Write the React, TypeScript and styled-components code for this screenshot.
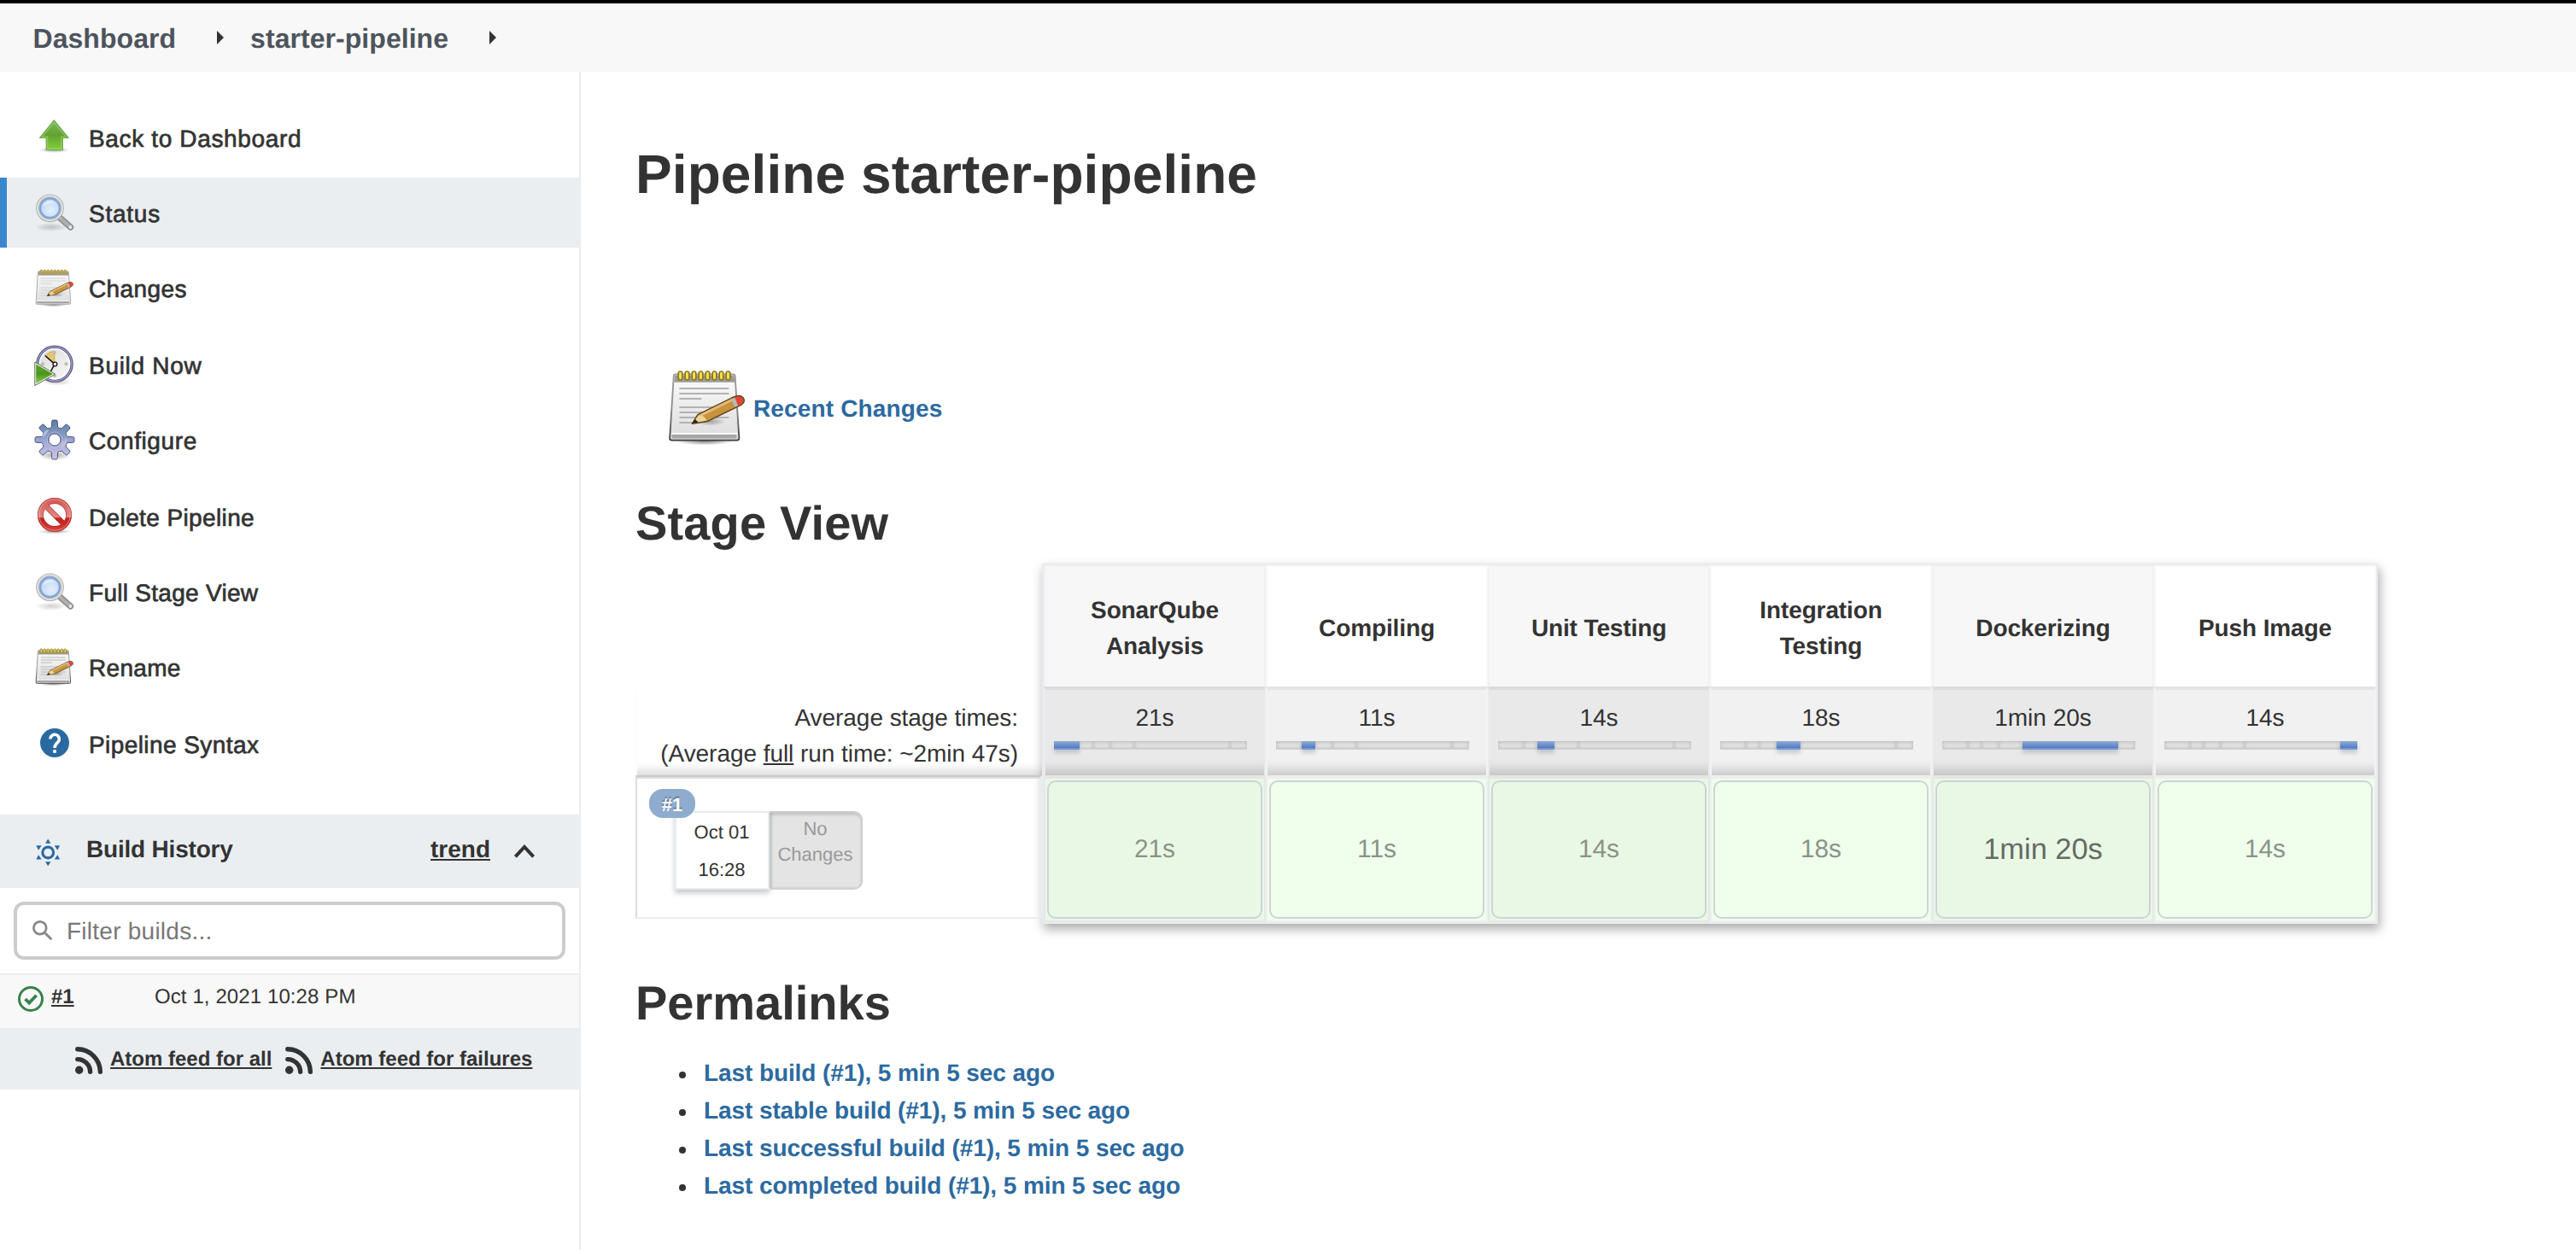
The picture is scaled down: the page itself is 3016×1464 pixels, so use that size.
import React from 'react';
import styled, { createGlobalStyle } from 'styled-components';

const GlobalStyle = createGlobalStyle`
  * { box-sizing: border-box; }
  html, body { margin: 0; padding: 0; background: #fff; }
  body {
    font-family: "Liberation Sans", Arial, sans-serif;
    font-size: 28px;
    line-height: 42px;
    color: #333;
    text-rendering: geometricPrecision;
    overflow: hidden;
  }
`;

/* ---------- page frame ---------- */

const Page = styled.div`
  width: 100%;
  height: 1464px;
  display: flex;
  flex-direction: column;
`;

const Breadcrumbs = styled.nav`
  flex: none;
  height: 84px;
  border-top: 4px solid #000;
  background: #f8f8f8;
  display: flex;
  align-items: center;
  padding: 0 0 0 38.5px;
`;

const Crumb = styled.a`
  font-size: 32px;
  line-height: 40px;
  font-weight: 700;
  letter-spacing: 0.05px;
  color: #4d545d;
  padding-top: 2px;
`;

const CrumbArrow = styled.span<{ $before: number; $after: number }>`
  width: 0;
  height: 0;
  margin: 0 ${p => p.$after}px 0 ${p => p.$before}px;
  border-left: 8px solid #333;
  border-top: 8px solid transparent;
  border-bottom: 8px solid transparent;
`;

const Body = styled.div`
  flex: 1;
  display: flex;
  min-height: 0;
`;

const Sidebar = styled.aside`
  flex: none;
  width: 680px;
  border-right: 2px solid #eaeef1;
  padding-top: 36px;
  display: flex;
  flex-direction: column;
`;

const Main = styled.main`
  flex: 1;
  padding: 80px 0 0 64px;
`;

/* ---------- side navigation ---------- */

const Tasks = styled.div`
  display: flex;
  flex-direction: column;
  gap: 6px;
  margin-bottom: 42px;
`;

const Task = styled.a<{ $active?: boolean; $height: number }>`
  height: ${p => p.$height}px;
  display: flex;
  align-items: flex-start;
  padding: 17px 0 0 ${p => (p.$active ? 32 : 40)}px;
  border-left: ${p => (p.$active ? '8px solid #3b87cf' : '0')};
  background: ${p => (p.$active ? '#eaeef1' : 'transparent')};
  gap: 16px;
`;

const TaskLabel = styled.span<{ $track: number }>`
  padding-top: 5px;
  letter-spacing: ${p => p.$track}px;
  -webkit-text-stroke: 0.7px #333;
`;

const IconBox = styled.svg<{ $size?: number }>`
  flex: none;
  display: block;
  overflow: visible;
  width: ${p => p.$size ?? 48}px;
  height: ${p => p.$size ?? 48}px;
`;

/* ---------- build history ---------- */

const HistoryHeader = styled.div`
  height: 86px;
  background: #eaeef1;
  display: flex;
  align-items: center;
  padding: 0 52px 0 41px;
`;

const HistoryTitle = styled.span`
  font-weight: 700;
  letter-spacing: -0.2px;
  margin-left: 29px;
  flex: 1;
  padding-bottom: 5px;
`;

const TrendLink = styled.a`
  font-weight: 700;
  text-decoration: underline;
  text-decoration-thickness: 2px;
  text-underline-offset: 2px;
  padding-bottom: 5px;
  margin-right: 28px;
`;

const FilterArea = styled.div`
  padding: 16px;
  height: 100px;
`;

const FilterField = styled.div`
  height: 68px;
  border: 4px solid #ccc;
  border-radius: 12px;
  display: flex;
  align-items: center;
  padding-left: 18px;
  gap: 16px;
  color: #777;
  letter-spacing: 0.25px;

  span {
    padding-top: 2px;
  }
`;

const BuildRow = styled.div`
  height: 64px;
  border-top: 2px solid #eaeef1;
  background: #f8f8f8;
  display: flex;
  align-items: flex-start;
  font-size: 24px;
  line-height: 30px;
  padding: 13px 0 0 21px;
`;

const BuildNumber = styled.div`
  width: 130px;
  padding-left: 9px;
  margin-top: -2px;
  font-weight: 700;
  text-decoration: underline;
  text-decoration-thickness: 2px;
  text-underline-offset: 2px;
`;

const BuildDate = styled.span`
  margin-top: -2px;
  letter-spacing: 0.1px;
`;

const FeedRow = styled.div`
  height: 72px;
  background: #eaeef1;
  display: flex;
  align-items: flex-start;
  padding: 22px 0 0 88px;
`;

const FeedLink = styled.a`
  font-size: 24px;
  line-height: 32px;
  font-weight: 700;
  text-decoration: underline;
  text-decoration-thickness: 2px;
  text-underline-offset: 2px;
  margin: -1px 16px 0 9px;
`;

/* ---------- main column ---------- */

const PageTitle = styled.h1`
  margin: 0 0 185px;
  font-size: 64px;
  line-height: 80px;
  font-weight: 700;
  letter-spacing: 0.1px;
`;

const SectionTitle = styled.h2<{ $track?: number }>`
  margin: 0;
  font-size: 56px;
  line-height: 72px;
  font-weight: 700;
  letter-spacing: ${p => p.$track ?? 0}px;
`;

const RecentChanges = styled.div`
  display: flex;
  align-items: center;
  padding-left: 36px;
  gap: 6px;
  margin-bottom: 52px;
`;

const BlueLink = styled.a<{ $track?: number }>`
  color: #2c6aa0;
  font-weight: 700;
  letter-spacing: ${p => p.$track ?? 0}px;
`;

const RecentLink = styled(BlueLink)`
  padding-top: 3px;
`;

/* ---------- stage view ---------- */

const StageView = styled.section`
  display: flex;
  align-items: flex-start;
  width: 2040px;
  margin: 11px 0 57px;
`;

const RunColumn = styled.div`
  width: 476px;
  padding-top: 148px;
`;

const AverageLabel = styled.div`
  height: 100px;
  padding: 12px 28px 0 0;
  text-align: right;
  letter-spacing: -0.05px;
  border-left: 2px solid #fcfcfc;
  box-shadow: inset 0 -18px 14px -14px rgba(0, 0, 0, 0.18);

  u {
    text-decoration-thickness: 2px;
    text-underline-offset: 2px;
  }
`;

const RunCell = styled.div`
  position: relative;
  height: 168px;
  border: 2px solid #ececec;
  border-left-color: #ddd;
  border-top-color: #c9c9c9;
  box-shadow: inset 0 2px 0 #dedede;
  padding: 40px 0 0 44px;
  display: flex;
  font-size: 22px;
`;

const RunBadge = styled.span`
  position: absolute;
  left: 14px;
  top: 14px;
  width: 54px;
  height: 34px;
  border-radius: 16px;
  background: #8facce;
  color: #fff;
  font-weight: 700;
  line-height: 37px;
  text-align: center;
  text-shadow: 0 -2px 1px rgba(0, 0, 0, 0.3);
`;

const RunDate = styled.div`
  width: 111px;
  height: 92px;
  border: 2px solid #e6ecf1;
  background: #fff;
  line-height: 44px;
  padding: 1px 1px 0 0;
  text-align: center;
  box-shadow: 0 4px 6px rgba(0, 0, 0, 0.22);
`;

const RunChanges = styled.div`
  width: 109px;
  height: 92px;
  border: 2px solid #ccc;
  border-left-width: 0;
  border-bottom-color: #d2d2d2;
  border-radius: 0 10px 10px 0;
  background: #e4e4e4;
  box-shadow: inset 0 3px 3px rgba(0, 0, 0, 0.1), inset 3px 0 3px rgba(0, 0, 0, 0.12);
  color: #999;
  line-height: 30px;
  padding-top: 4px;
  text-align: center;
`;

const Stages = styled.div`
  display: grid;
  grid-template-columns: repeat(6, 260px);
  border: 2px solid #e8ecf0;
  box-shadow: 2px 6px 12px rgba(0, 0, 0, 0.34);
  background: #fff;
`;

const Stage = styled.div`
  display: flex;
  flex-direction: column;
`;

type Shade = { $odd: boolean };

const StageHeader = styled.div<Shade>`
  height: 142px;
  border: 2px solid ${p => (p.$odd ? '#f1f1f1' : '#f8f8f8')};
  border-bottom: 0;
  background: ${p => (p.$odd ? '#f7f7f7' : '#fff')};
  display: flex;
  align-items: center;
  justify-content: center;
  text-align: center;
  padding: 4px 40px 0;
  font-weight: 700;
  letter-spacing: -0.12px;
`;

const StageAverage = styled.div<Shade>`
  height: 104px;
  border: 2px solid ${p => (p.$odd ? '#ebebeb' : '#f3f3f3')};
  border-top: 4px solid ${p => (p.$odd ? '#dcdcdc' : '#e4e4e4')};
  border-bottom: 0;
  background: ${p => (p.$odd ? '#e9e9e9' : '#f1f1f1')};
  box-shadow: inset 0 -20px 14px -14px rgba(0, 0, 0, 0.18);
  text-align: center;
  padding: 12px 20px 0 10px;
`;

const AverageTime = styled.div`
  margin-right: -10px;
`;

const Timeline = styled.div`
  display: flex;
  height: 10px;
  width: 226px;
  margin-top: 6px;
`;

const Segment = styled.span<{ $active: boolean }>`
  height: 10px;
  background: ${p => (p.$active ? 'linear-gradient(#8eaed0, #5579c4)' : '#e2e2e2')};
  border-bottom: 2px solid ${p => (p.$active ? '#6f98da' : '#cfcfcf')};
  box-shadow: ${p =>
    p.$active ? '0 4px 5px rgba(0, 0, 0, 0.16)' : 'inset 0 1px 4px rgba(0, 0, 0, 0.2)'};
`;

const StageResult = styled.div<Shade>`
  height: 172px;
  border: 2px solid ${p => (p.$odd ? '#e6e8e8' : '#efefef')};
  border-top: 4px solid ${p => (p.$odd ? '#e6e6e6' : '#eeeeee')};
  background: ${p => (p.$odd ? '#e9f8e5' : '#f0ffec')};
  padding: 2px;
`;

const ResultTile = styled.div<{ $slow: boolean }>`
  height: 162px;
  border: 2px solid #ced3d6;
  border-radius: 10px;
  display: flex;
  align-items: center;
  justify-content: center;
  font-size: ${p => (p.$slow ? 34.4 : 29.8)}px;
  color: ${p => (p.$slow ? '#656b64' : '#8a9388')};
`;

/* ---------- permalinks ---------- */

const Permalinks = styled.ul`
  list-style: none;
  margin: 24px 0 0;
  padding: 0 0 0 51px;
`;

const Permalink = styled.li`
  display: flex;
  align-items: center;
  height: 44px;
  gap: 21px;

  &::before {
    content: '';
    width: 8px;
    height: 8px;
    border-radius: 50%;
    background: #333;
    margin-top: 3px;
  }
`;

/* ---------- icons ---------- */

const UpArrowIcon = () => (
  <IconBox viewBox="0 0 48 48">
    <defs>
      <linearGradient id="up" x1="0" y1="0" x2="0" y2="1">
        <stop offset="0" stopColor="#7fb858" />
        <stop offset="0.5" stopColor="#62a233" />
        <stop offset="1" stopColor="#86cf3a" />
      </linearGradient>
      <radialGradient id="floor">
        <stop offset="0" stopColor="#000" stopOpacity="0.35" />
        <stop offset="1" stopColor="#000" stopOpacity="0" />
      </radialGradient>
    </defs>
    <ellipse cx="23.5" cy="38.6" rx="18" ry="3.5" fill="url(#floor)" />
    <path d="M23.3 4 L40 24.4 H33.3 V38.6 H14.3 V24.4 H6.6 Z" fill="url(#up)" stroke="#74ad50" strokeWidth="1.3" strokeLinejoin="round" />
    <path d="M23.3 6.5 L37 23.1 H32 V37.1 H15.7 V23.1 H9.5 Z" fill="none" stroke="#a5dc74" strokeOpacity="0.55" strokeWidth="1.2" />
  </IconBox>
);

const MagnifierIcon = () => (
  <IconBox viewBox="0 0 48 48">
    <defs>
      <radialGradient id="lens" cx="0.55" cy="0.6" r="0.6">
        <stop offset="0" stopColor="#e2effc" />
        <stop offset="0.6" stopColor="#c8ddf5" />
        <stop offset="1" stopColor="#a5c5eb" />
      </radialGradient>
      <radialGradient id="mfloor">
        <stop offset="0" stopColor="#000" stopOpacity="0.18" />
        <stop offset="0.5" stopColor="#000" stopOpacity="0.1" />
        <stop offset="1" stopColor="#000" stopOpacity="0" />
      </radialGradient>
    </defs>
    <ellipse cx="20" cy="41" rx="19" ry="5" fill="url(#mfloor)" />
    <path d="M29.5 29.5 L42.5 41" stroke="#8f8f8f" strokeWidth="7.4" strokeLinecap="round" />
    <path d="M29.5 29.5 L42.5 41" stroke="#b0b0b0" strokeWidth="4" strokeLinecap="round" />
    <circle cx="42.5" cy="41" r="1.9" fill="#e6e6e6" />
    <circle cx="18.5" cy="18.8" r="14.4" fill="url(#lens)" stroke="#b3b5b3" strokeWidth="4" />
    <circle cx="18.5" cy="18.8" r="14.4" fill="none" stroke="#e4e5e4" strokeWidth="1.8" />
    <circle cx="18.5" cy="18.8" r="11.4" fill="none" stroke="#82a5d8" strokeWidth="2.2" />
    <path d="M10 17 A9 9 0 0 1 25 12.5 Q16 12 10 17 Z" fill="#fff" opacity="0.5" />
  </IconBox>
);

const NotepadIcon = ({ size = 48, soft = false }: { size?: number; soft?: boolean }) => (
  <IconBox viewBox="0 0 48 48" $size={size}>
    <defs>
      <linearGradient id="sheet" x1="0" y1="0" x2="0" y2="1">
        <stop offset="0" stopColor="#fbfbfb" />
        <stop offset="1" stopColor="#dcdcdc" />
      </linearGradient>
      <linearGradient id="edge" x1="0" y1="0" x2="0" y2="1">
        <stop offset="0" stopColor="#9a9a9a" />
        <stop offset="0.5" stopColor="#8a8a8a" />
        <stop offset="1" stopColor="#3c3c3c" />
      </linearGradient>
      <radialGradient id="nfloor">
        <stop offset="0" stopColor="#000" stopOpacity="0.5" />
        <stop offset="1" stopColor="#000" stopOpacity="0" />
      </radialGradient>
    </defs>
    <ellipse cx="22.5" cy="43.8" rx="17" ry="2.4" fill="url(#nfloor)" />
    <path
      d="M5.3 4.7 H39.3 Q40.2 4.7 40.3 5.7 L42.7 42 Q42.7 43.3 41.5 43.3 H3.2 Q2 43.3 2.1 42 L4.4 5.7 Q4.5 4.7 5.3 4.7 Z"
      fill="url(#sheet)"
      stroke={soft ? '#a6a6a6' : 'url(#edge)'}
      strokeWidth="0.9"
    />
    <path d="M5 5.2 H39.8 L40.1 9.4 H4.7 Z" fill="#9c9c96" />
    <path d="M3.4 40 H41.2 V42.3 H3.3 Z" fill="#a6a6a6" />
    <path d="M3 39.4 H41.8" stroke="#fff" strokeWidth="0.7" />
    <path
      d="M7.7 13 H36.7 M7.7 16 H36.7 M7.7 19 H20.7 M7.7 24 H32 M7.7 27 H28 M7.7 30 H36.7 M7.7 33 H16"
      stroke={soft ? '#d0d0d0' : '#b2b2b2'}
      strokeWidth="0.9"
    />
    <g fill={soft ? '#c9b14e' : '#f6e04c'} stroke={soft ? '#ad963c' : '#8c7618'} strokeWidth="0.8">
      {[0, 1, 2, 3, 4, 5, 6, 7].map(i => (
        <rect key={i} x={7.1 + i * 4} y="3" width="2.3" height="5" rx="1.1" />
      ))}
    </g>
    <ellipse cx="26" cy="32.3" rx="9" ry="2.6" fill="url(#nfloor)" opacity="0.6" />
    <path d="M15.2 33.6 L18.5 28.4 L39.6 18 Q43 16.4 45 18.4 Q46.8 20.8 43.5 22.8 L24.2 32.2 Z" fill="#c8933f" stroke="#5f4312" strokeWidth="0.8" strokeLinejoin="round" />
    <path d="M20 28.8 L38.7 19.5" stroke="#e4bd78" strokeWidth="1.5" />
    <path d="M15.8 33.2 L18.7 28.7 Q21.5 28 23.9 31.8 Z" fill="#ecd49c" />
    <path d="M15.4 33.5 L17 31.1 L18.8 32.7 Z" fill="#222" />
    <path d="M38 19.2 L40.2 18.2 L42.3 22.9 L40.2 23.9 Z" fill="#b9b9b9" />
    <path d="M40.2 18.2 Q43 17 44.5 18.6 Q46 20.8 43.3 22.4 L42 23 Z" fill="#e8413b" />
  </IconBox>
);

const ClockIcon = () => (
  <IconBox viewBox="0 0 48 48">
    <defs>
      <linearGradient id="face" x1="0" y1="0" x2="1" y2="1">
        <stop offset="0" stopColor="#d9d9d6" />
        <stop offset="1" stopColor="#fafafa" />
      </linearGradient>
      <linearGradient id="play" x1="0" y1="0" x2="0" y2="1">
        <stop offset="0" stopColor="#5da62c" />
        <stop offset="0.5" stopColor="#4b961f" />
        <stop offset="1" stopColor="#8ccb4c" />
      </linearGradient>
    </defs>
    <ellipse cx="27" cy="44.6" rx="18" ry="4" fill="url(#mfloor)" />
    <circle cx="24" cy="23.3" r="20" fill="url(#face)" stroke="#5c5b85" strokeWidth="3.6" />
    <circle cx="24" cy="23.3" r="20" fill="none" stroke="#a7a6cd" strokeWidth="1.2" />
    <circle cx="24" cy="23.3" r="17.7" fill="none" stroke="#fff" strokeWidth="1.3" />
    <path d="M24 23.3 L13 13.5 Q17.5 8.8 24 8.2 Z" fill="#e2c671" stroke="#c9ab56" strokeWidth="0.8" />
    <g fill="#b8b8b4">
      <circle cx="23.7" cy="9.7" r="2" />
      <circle cx="37.4" cy="23.3" r="2" />
      <circle cx="10" cy="23.3" r="2" />
      <circle cx="24" cy="37" r="2" />
    </g>
    <path d="M24 23.3 L12.8 13.5 M24 23.3 L19.5 32" stroke="#111" strokeWidth="1.6" />
    <circle cx="24.4" cy="23.5" r="2.4" fill="#fff" stroke="#111" strokeWidth="1.3" />
    <path d="M0.8 21 L24.6 35.2 L0.8 48.6 Z" fill="#fff" stroke="#5c6b50" strokeWidth="1" />
    <path d="M2.2 23.5 L22 35.1 L2.2 46.2 Z" fill="url(#play)" />
  </IconBox>
);

const gearOutline = (teeth: number, cx: number, cy: number, tip: number, root: number) => {
  const at = (r: number, a: number) =>
    `${(cx + r * Math.sin(a)).toFixed(2)} ${(cy - r * Math.cos(a)).toFixed(2)}`;
  let d = '';
  for (let i = 0; i < teeth; i++) {
    const a = (i * 2 * Math.PI) / teeth;
    d += `${i ? 'L' : 'M'}${at(root, a - 0.23)} L${at(tip - 1, a - 0.15)} Q${at(tip, a - 0.14)} ${at(tip, a - 0.08)} `;
    d += `L${at(tip, a + 0.08)} Q${at(tip, a + 0.14)} ${at(tip - 1, a + 0.15)} L${at(root, a + 0.23)} `;
    d += `Q${at(root - 1.5, a + Math.PI / teeth)} ${at(root, a + (2 * Math.PI) / teeth - 0.23)} `;
  }
  return `${d}Z M${cx - 7} ${cy} a7 7 0 1 0 14 0 a7 7 0 1 0 -14 0 Z`;
};

const GearIcon = () => (
  <IconBox viewBox="0 0 48 48">
    <defs>
      <linearGradient id="gear" x1="0" y1="0" x2="0" y2="1">
        <stop offset="0" stopColor="#5c7da8" />
        <stop offset="0.35" stopColor="#8298c2" />
        <stop offset="0.6" stopColor="#a7acd6" />
        <stop offset="1" stopColor="#cfc5e6" />
      </linearGradient>
    </defs>
    <ellipse cx="24" cy="42" rx="19" ry="6" fill="url(#floor)" />
    <path d={gearOutline(8, 24, 24, 23, 15.5)} fill="url(#gear)" fillRule="evenodd" stroke="#4c5480" strokeWidth="1" strokeLinejoin="round" />
    <path d="M9.5 22 Q10 14 17 12 Q15 17 13 19 Z" fill="#c2d0e6" opacity="0.8" />
    <path d="M30 33 Q31 27 38 22 Q39 30 33 35 Z" fill="#c3bfe0" opacity="0.8" />
    <circle cx="24" cy="24" r="9" fill="none" stroke="#b8c3df" strokeWidth="1" opacity="0.6" />
  </IconBox>
);

const StopIcon = () => (
  <IconBox viewBox="0 0 48 48">
    <defs>
      <linearGradient id="stop" gradientUnits="userSpaceOnUse" x1="0" y1="2" x2="0" y2="42">
        <stop offset="0" stopColor="#d4524d" />
        <stop offset="0.56" stopColor="#e08a85" />
        <stop offset="0.6" stopColor="#c1221a" />
        <stop offset="1" stopColor="#d8403a" />
      </linearGradient>
    </defs>
    <ellipse cx="24" cy="41.5" rx="20" ry="3" fill="url(#floor)" />
    <circle cx="24" cy="22" r="16.6" fill="#fff" stroke="#a92c26" strokeWidth="7" />
    <path d="M13 11 L35 33" stroke="#a92c26" strokeWidth="6.6" />
    <circle cx="24" cy="22" r="16.6" fill="none" stroke="url(#stop)" strokeWidth="5.8" />
    <path d="M12.6 10.6 L35.4 33.4" stroke="url(#stop)" strokeWidth="5.2" />
    <circle cx="24" cy="22" r="18.2" fill="none" stroke="#f4c4c1" strokeWidth="0.8" opacity="0.7" />
  </IconBox>
);

const HelpIcon = () => (
  <IconBox viewBox="0 0 48 48">
    <circle cx="24" cy="23" r="17" fill="#2b6aa0" />
    <path d="M18.9 18.6 A5.2 5.2 0 1 1 27.7 22.3 C25.4 24.3 24 25.3 24 29" fill="none" stroke="#fff" strokeWidth="3.5" />
    <rect x="22.2" y="31.2" width="3.6" height="3.6" fill="#fff" />
  </IconBox>
);

const SunIcon = () => (
  <IconBox viewBox="0 0 30 32" $size={31}>
    <circle cx="14.7" cy="17" r="6.6" fill="none" stroke="#2b6aa0" strokeWidth="3.2" />
    <g fill="#2b6aa0">
      <path d="M14.7 0.6 L18 6 H11.4 Z M14.7 33.4 L18 28 H11.4 Z" />
      <path d="M0.4 8.6 H7 L3.2 14.2 Z M29 8.6 H22.4 L26.2 14.2 Z" />
      <path d="M0.4 25.4 H7 L3.2 19.8 Z M29 25.4 H22.4 L26.2 19.8 Z" />
    </g>
  </IconBox>
);

const ChevronUpIcon = () => (
  <IconBox viewBox="0 0 24 24" $size={24}>
    <path d="M1.4 18.4 L12 7 L22.6 18.4" fill="none" stroke="#333" strokeWidth="4" />
  </IconBox>
);

const SearchIcon = () => (
  <IconBox viewBox="0 0 24 24" $size={24}>
    <circle cx="8.8" cy="8.8" r="7.4" fill="none" stroke="#888" strokeWidth="2.7" />
    <path d="M14.2 14.2 L22.3 22.3" stroke="#888" strokeWidth="3" />
  </IconBox>
);

const SuccessIcon = () => (
  <IconBox viewBox="0 0 30 30" $size={30}>
    <circle cx="15" cy="15" r="13.5" fill="none" stroke="#37834a" strokeWidth="3" />
    <path d="M8.6 15.2 L13.2 19.6 L21.6 10.8" fill="none" stroke="#37834a" strokeWidth="3.8" />
  </IconBox>
);

const FeedIcon = () => (
  <IconBox viewBox="0 0 32 32" $size={32}>
    <circle cx="4.7" cy="27.3" r="4.7" fill="#333" />
    <path d="M2.8 14.6 A15 15 0 0 1 17.6 29.2" fill="none" stroke="#333" strokeWidth="5.4" strokeLinecap="round" />
    <path d="M2.8 2.8 A27 27 0 0 1 29.4 29.2" fill="none" stroke="#333" strokeWidth="5.4" strokeLinecap="round" />
  </IconBox>
);

/* ---------- data ---------- */

const tasks = [
  { label: 'Back to Dashboard', icon: <UpArrowIcon />, height: 82, track: 0.65 },
  { label: 'Status', icon: <MagnifierIcon />, height: 82, track: 0.75, active: true },
  { label: 'Changes', icon: <NotepadIcon soft />, height: 84, track: 0.4 },
  { label: 'Build Now', icon: <ClockIcon />, height: 82, track: 0.7 },
  { label: 'Configure', icon: <GearIcon />, height: 84, track: 0.6 },
  { label: 'Delete Pipeline', icon: <StopIcon />, height: 82, track: 0.38 },
  { label: 'Full Stage View', icon: <MagnifierIcon />, height: 82, track: 0.28 },
  { label: 'Rename', icon: <NotepadIcon />, height: 84, track: 0.3 },
  { label: 'Pipeline Syntax', icon: <HelpIcon />, height: 82, track: 0.42 },
];

const stages = [
  { name: 'SonarQube Analysis', time: '21s', share: 30 },
  { name: 'Compiling', time: '11s', share: 16 },
  { name: 'Unit Testing', time: '14s', share: 20 },
  { name: 'Integration Testing', time: '18s', share: 28 },
  { name: 'Dockerizing', time: '1min 20s', share: 112, slow: true },
  { name: 'Push Image', time: '14s', share: 20 },
];

const permalinks = [
  'Last build (#1), 5 min 5 sec ago',
  'Last stable build (#1), 5 min 5 sec ago',
  'Last successful build (#1), 5 min 5 sec ago',
  'Last completed build (#1), 5 min 5 sec ago',
];

/* ---------- page ---------- */

export default function App() {
  return (
    <>
      <GlobalStyle />
      <Page>
        <Breadcrumbs>
          <Crumb>Dashboard</Crumb>
          <CrumbArrow $before={48} $after={31} />
          <Crumb>starter-pipeline</Crumb>
          <CrumbArrow $before={48} $after={0} />
        </Breadcrumbs>
        <Body>
          <Sidebar>
            <Tasks>
              {tasks.map(t => (
                <Task key={t.label} $active={t.active} $height={t.height}>
                  {t.icon}
                  <TaskLabel $track={t.track}>{t.label}</TaskLabel>
                </Task>
              ))}
            </Tasks>
            <HistoryHeader>
              <SunIcon />
              <HistoryTitle>Build History</HistoryTitle>
              <TrendLink>trend</TrendLink>
              <ChevronUpIcon />
            </HistoryHeader>
            <FilterArea>
              <FilterField>
                <SearchIcon />
                <span>Filter builds...</span>
              </FilterField>
            </FilterArea>
            <BuildRow>
              <SuccessIcon />
              <BuildNumber>#1</BuildNumber>
              <BuildDate>Oct 1, 2021 10:28 PM</BuildDate>
            </BuildRow>
            <FeedRow>
              <FeedIcon />
              <FeedLink>Atom feed for all</FeedLink>
              <FeedIcon />
              <FeedLink>Atom feed for failures</FeedLink>
            </FeedRow>
          </Sidebar>
          <Main>
            <PageTitle>Pipeline starter-pipeline</PageTitle>
            <RecentChanges>
              <NotepadIcon size={96} />
              <RecentLink $track={0.15}>Recent Changes</RecentLink>
            </RecentChanges>
            <SectionTitle $track={0.15}>Stage View</SectionTitle>
            <StageView>
              <RunColumn>
                <AverageLabel>
                  Average stage times:
                  <br />
                  (Average <u>full</u> run time: ~2min 47s)
                </AverageLabel>
                <RunCell>
                  <RunDate>
                    Oct 01
                    <br />
                    16:28
                  </RunDate>
                  <RunChanges>
                    No
                    <br />
                    Changes
                  </RunChanges>
                  <RunBadge>#1</RunBadge>
                </RunCell>
              </RunColumn>
              <Stages>
                {stages.map((stage, i) => (
                  <Stage key={stage.name}>
                    <StageHeader $odd={i % 2 === 0}>{stage.name}</StageHeader>
                    <StageAverage $odd={i % 2 === 0}>
                      <AverageTime>{stage.time}</AverageTime>
                      <Timeline>
                        {stages.map((s, j) => (
                          <Segment key={s.name} $active={i === j} style={{ width: s.share }} />
                        ))}
                      </Timeline>
                    </StageAverage>
                    <StageResult $odd={i % 2 === 0}>
                      <ResultTile $slow={!!stage.slow}>{stage.time}</ResultTile>
                    </StageResult>
                  </Stage>
                ))}
              </Stages>
            </StageView>
            <SectionTitle>Permalinks</SectionTitle>
            <Permalinks>
              {permalinks.map(text => (
                <Permalink key={text}>
                  <BlueLink $track={-0.09}>{text}</BlueLink>
                </Permalink>
              ))}
            </Permalinks>
          </Main>
        </Body>
      </Page>
    </>
  );
}
